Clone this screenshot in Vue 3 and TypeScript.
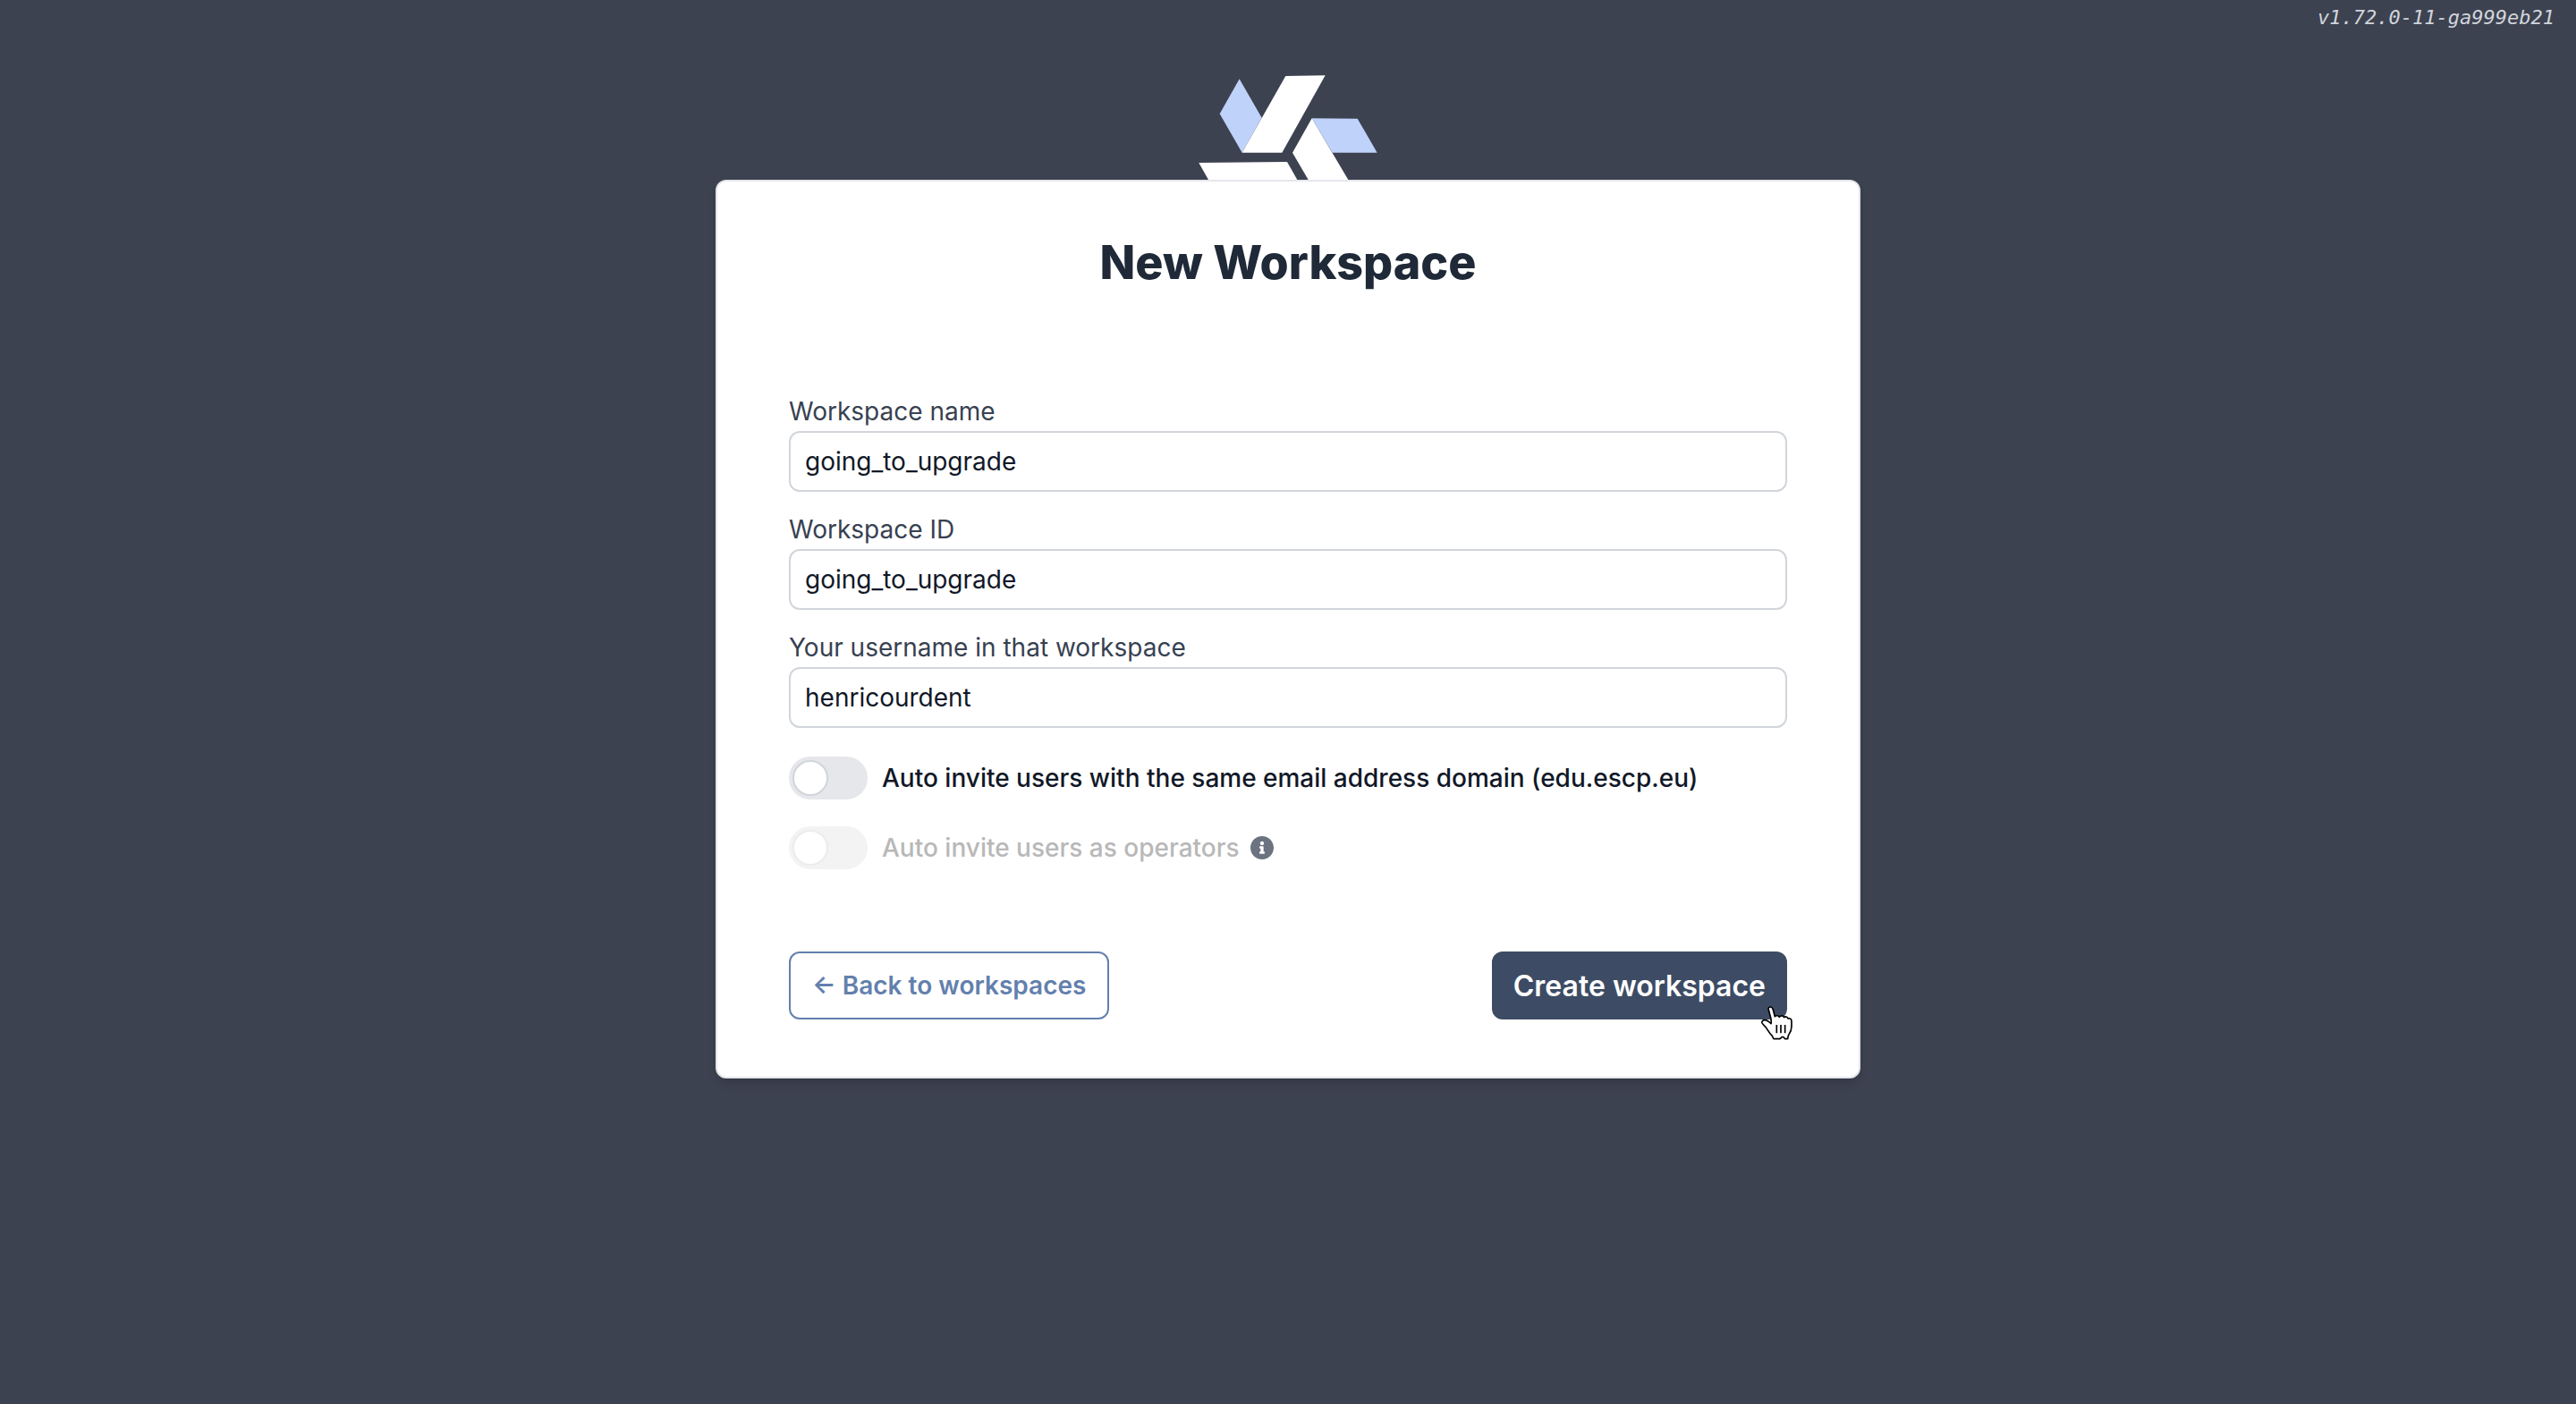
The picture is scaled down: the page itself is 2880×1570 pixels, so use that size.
<script setup lang="ts">
import { reactive, ref } from 'vue'

interface Field {
  id: string
  label: string
  value: string
}

const version = 'v1.72.0-11-ga999eb21'
const domain = 'edu.escp.eu'

const fields = reactive<Field[]>([
  { id: 'workspace-name', label: 'Workspace name', value: 'going_to_upgrade' },
  { id: 'workspace-id', label: 'Workspace ID', value: 'going_to_upgrade' },
  { id: 'username', label: 'Your username in that workspace', value: 'henricourdent' },
])

const autoInvite = ref(false)
const inviteAsOperator = ref(false)
</script>

<template>
  <div class="page">
    <header class="version">{{ version }}</header>

    <svg class="logo" viewBox="0 0 720 423" aria-hidden="true">
      <polygon class="blade-light" points="197,85 272,215 206,332 131,202" />
      <polygon class="blade-light" points="440,217 593,218 659,332 509,332" />
      <polygon class="blade" points="352,75 485,73 340,332 206,332" />
      <polygon class="blade" points="440,217 562,423 428,423 375,332" />
      <polygon class="blade" points="61,366 357,363 391,423 93,423" />
    </svg>

    <main class="card">
      <h1>New Workspace</h1>

      <form @submit.prevent>
        <div class="fields">
          <div v-for="field in fields" :key="field.id" class="field">
            <label :for="field.id">{{ field.label }}</label>
            <input :id="field.id" v-model="field.value" type="text" />
          </div>
        </div>

        <div class="toggles">
          <label class="toggle">
            <input v-model="autoInvite" type="checkbox" />
            <span>Auto invite users with the same email address domain ({{ domain }})</span>
          </label>
          <div class="toggle-row">
            <label class="toggle disabled">
              <input v-model="inviteAsOperator" type="checkbox" :disabled="!autoInvite" />
              <span>Auto invite users as operators</span>
            </label>
            <svg class="info" viewBox="8 8 496 496" aria-hidden="true">
              <path
                d="M256 8C119.043 8 8 119.083 8 256c0 136.997 111.043 248 248 248s248-111.003 248-248C504 119.083 392.957 8 256 8zm0 110c23.196 0 42 18.804 42 42s-18.804 42-42 42-42-18.804-42-42 18.804-42 42-42zm56 254c0 6.627-5.373 12-12 12h-88c-6.627 0-12-5.373-12-12v-24c0-6.627 5.373-12 12-12h12v-64h-12c-6.627 0-12-5.373-12-12v-24c0-6.627 5.373-12 12-12h64c6.627 0 12 5.373 12 12v100h12c6.627 0 12 5.373 12 12v24z"
              />
            </svg>
          </div>
        </div>

        <div class="actions">
          <a class="button back" href="#">← Back to workspaces</a>
          <div class="submit">
            <button class="button create" type="submit">Create workspace</button>
            <svg class="pointer" viewBox="28 44 105 114" aria-hidden="true">
              <path
                class="hand"
                d="M53 57C51 50 54 47 59 47C64 47 66 50 68 56L74 79C78 75 86 75 89 81C93 75 101 75 105 82C109 78 115 79 118 86C124 84 130 87 130 95V112C130 126 126 132 121 139C118 143 118 149 117 154H108C106 152 103 147 100 147C97 147 94 152 91 154H70C67 152 68 148 65 144C57 137 52 128 47 120C42 112 34 107 31 101C29 95 34 91 40 91C48 91 54 96 61 103C62 98 62 91 60 83Z"
              />
              <path class="crease" d="M80 107V135M94 107V135M108 107V135" />
            </svg>
          </div>
        </div>
      </form>
    </main>
  </div>
</template>

<style>
body {
  background: #3d4251;
}
</style>

<style scoped>
.page {
  display: flex;
  flex-direction: column;
  align-items: center;
  min-height: 100vh;
  background: #3d4251;
  color: #111827;
  font-family: Inter, "Liberation Sans", sans-serif;
  font-size: 28px;
  line-height: 40px;
}

.version {
  align-self: stretch;
  padding-right: 24px;
  margin-bottom: 20px;
  color: #d1d5db;
  font-family: "DejaVu Sans Mono", "Liberation Mono", monospace;
  font-size: 22px;
  font-style: italic;
  text-align: right;
}

.logo {
  display: block;
  width: 240px;
  height: 141px;
}

.blade {
  fill: #fff;
}

.blade-light {
  fill: #bfd2f9;
}

.card {
  box-sizing: border-box;
  width: 100%;
  max-width: 1280px;
  padding: 55px 80px 64px;
  border: 2px solid #e5e7eb;
  border-radius: 12px;
  background: #fff;
  box-shadow: 0 8px 12px -2px rgba(0, 0, 0, 0.1), 0 4px 8px -4px rgba(0, 0, 0, 0.1);
}

h1 {
  margin: 0 0 108px;
  color: #1f2937;
  font-size: 52px;
  font-weight: 800;
  line-height: 72px;
  text-align: center;
}

.fields {
  display: flex;
  flex-direction: column;
  gap: 20px;
}

.field label {
  display: block;
  color: #374151;
  line-height: 44px;
}

.field input {
  display: block;
  box-sizing: border-box;
  width: 100%;
  height: 68px;
  padding: 0 16px;
  border: 2px solid #d1d5db;
  border-radius: 12px;
  background: #fff;
  color: #111827;
  font: inherit;
}

.toggles {
  display: flex;
  flex-direction: column;
  gap: 30px;
  margin-top: 32px;
}

.toggle-row {
  display: flex;
  align-items: center;
  gap: 12px;
}

.toggle {
  display: flex;
  align-items: center;
  gap: 16px;
  font-weight: 500;
}

.toggle input {
  appearance: none;
  flex: none;
  box-sizing: border-box;
  width: 88px;
  height: 48px;
  margin: 0;
  padding: 4px;
  border-radius: 24px;
  background: #e5e7eb;
}

.toggle input::before {
  content: "";
  display: block;
  box-sizing: border-box;
  width: 40px;
  height: 40px;
  border: 2px solid #d1d5db;
  border-radius: 50%;
  background: #fff;
}

.toggle input:checked::before {
  margin-left: auto;
}

.toggle.disabled {
  color: #b8b8b8;
}

.toggle.disabled input {
  background: #f3f3f3;
}

.toggle.disabled input::before {
  border-color: #ececec;
}

.info {
  width: 26px;
  height: 26px;
  fill: #6b7280;
}

.actions {
  display: flex;
  justify-content: space-between;
  margin-top: 92px;
}

.button {
  display: flex;
  align-items: center;
  box-sizing: border-box;
  height: 76px;
  padding: 0 24px;
  border: 2px solid;
  border-radius: 12px;
  font-family: inherit;
  font-weight: 600;
  text-decoration: none;
}

.back {
  border-color: #6380ad;
  color: #6380ad;
}

.create {
  padding: 0 22px;
  border-color: #3d4c64;
  background: #3d4c64;
  color: #fff;
  font-size: 32px;
}

.submit {
  position: relative;
}

.pointer {
  position: absolute;
  right: -6px;
  bottom: -23px;
  width: 35px;
  height: 38px;
}

.hand {
  fill: #fff;
  stroke: #000;
  stroke-width: 5;
  stroke-linejoin: round;
}

.crease {
  fill: none;
  stroke: #000;
  stroke-width: 5;
}
</style>
